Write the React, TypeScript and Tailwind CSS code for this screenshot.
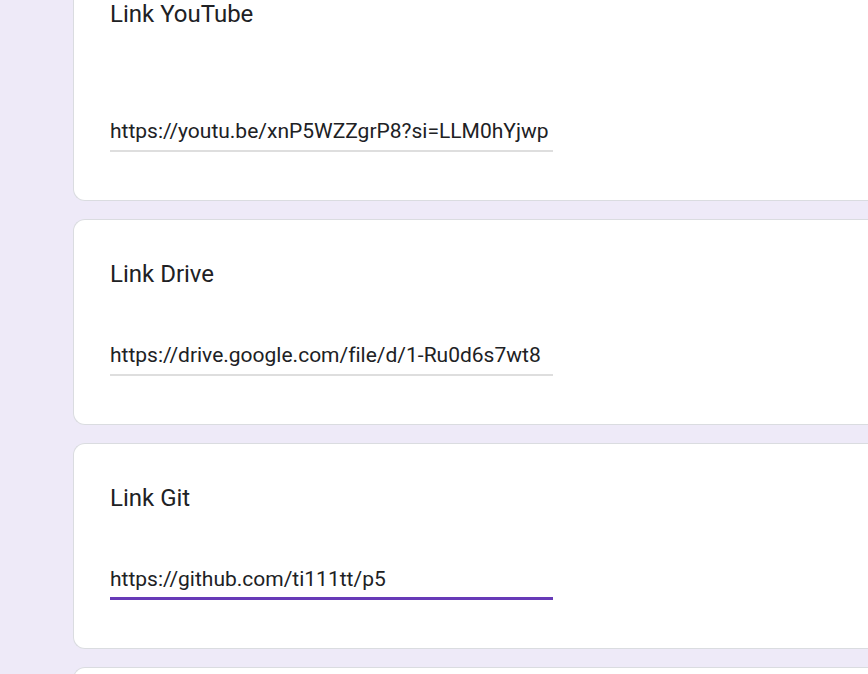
type Question = {
  id: string;
  title: string;
  value: string;
  described?: boolean;
  active?: boolean;
};

const questions: Question[] = [
  {
    id: "youtube",
    title: "Link YouTube",
    value: "https://youtu.be/xnP5WZZgrP8?si=LLM0hYjwp",
    described: true,
  },
  {
    id: "drive",
    title: "Link Drive",
    value: "https://drive.google.com/file/d/1-Ru0d6s7wt8",
  },
  {
    id: "git",
    title: "Link Git",
    value: "https://github.com/ti111tt/p5",
    active: true,
  },
];

const card = "rounded-l-xl border border-r-0 border-[#dadce0] bg-white px-9";

function QuestionCard({ id, title, value, described, active }: Question) {
  return (
    <section className={`${card} pt-9 pb-12`}>
      <label htmlFor={id} className="block text-2xl leading-9">
        {title}
      </label>
      <div
        className={`h-[38px] w-full max-w-[443px] ${described ? "mt-[82px]" : "mt-[46px]"} ${
          active ? "border-b-3 border-[#673ab7]" : "border-b-2 border-[#dedede]"
        }`}
      >
        <input
          id={id}
          type="text"
          defaultValue={value}
          className="block h-[34px] w-full bg-transparent text-[21px] leading-[34px] outline-none [font-variant-ligatures:none]"
        />
      </div>
    </section>
  );
}

export default function App() {
  return (
    <main className="h-screen overflow-hidden bg-[#eeeaf8] pl-[73px] font-['Roboto',sans-serif] text-[#202124]">
      <form className="-mt-[41px] flex flex-col gap-[18px]">
        {questions.map((question) => (
          <QuestionCard key={question.id} {...question} />
        ))}
        <section className={`${card} h-52`} />
      </form>
    </main>
  );
}
